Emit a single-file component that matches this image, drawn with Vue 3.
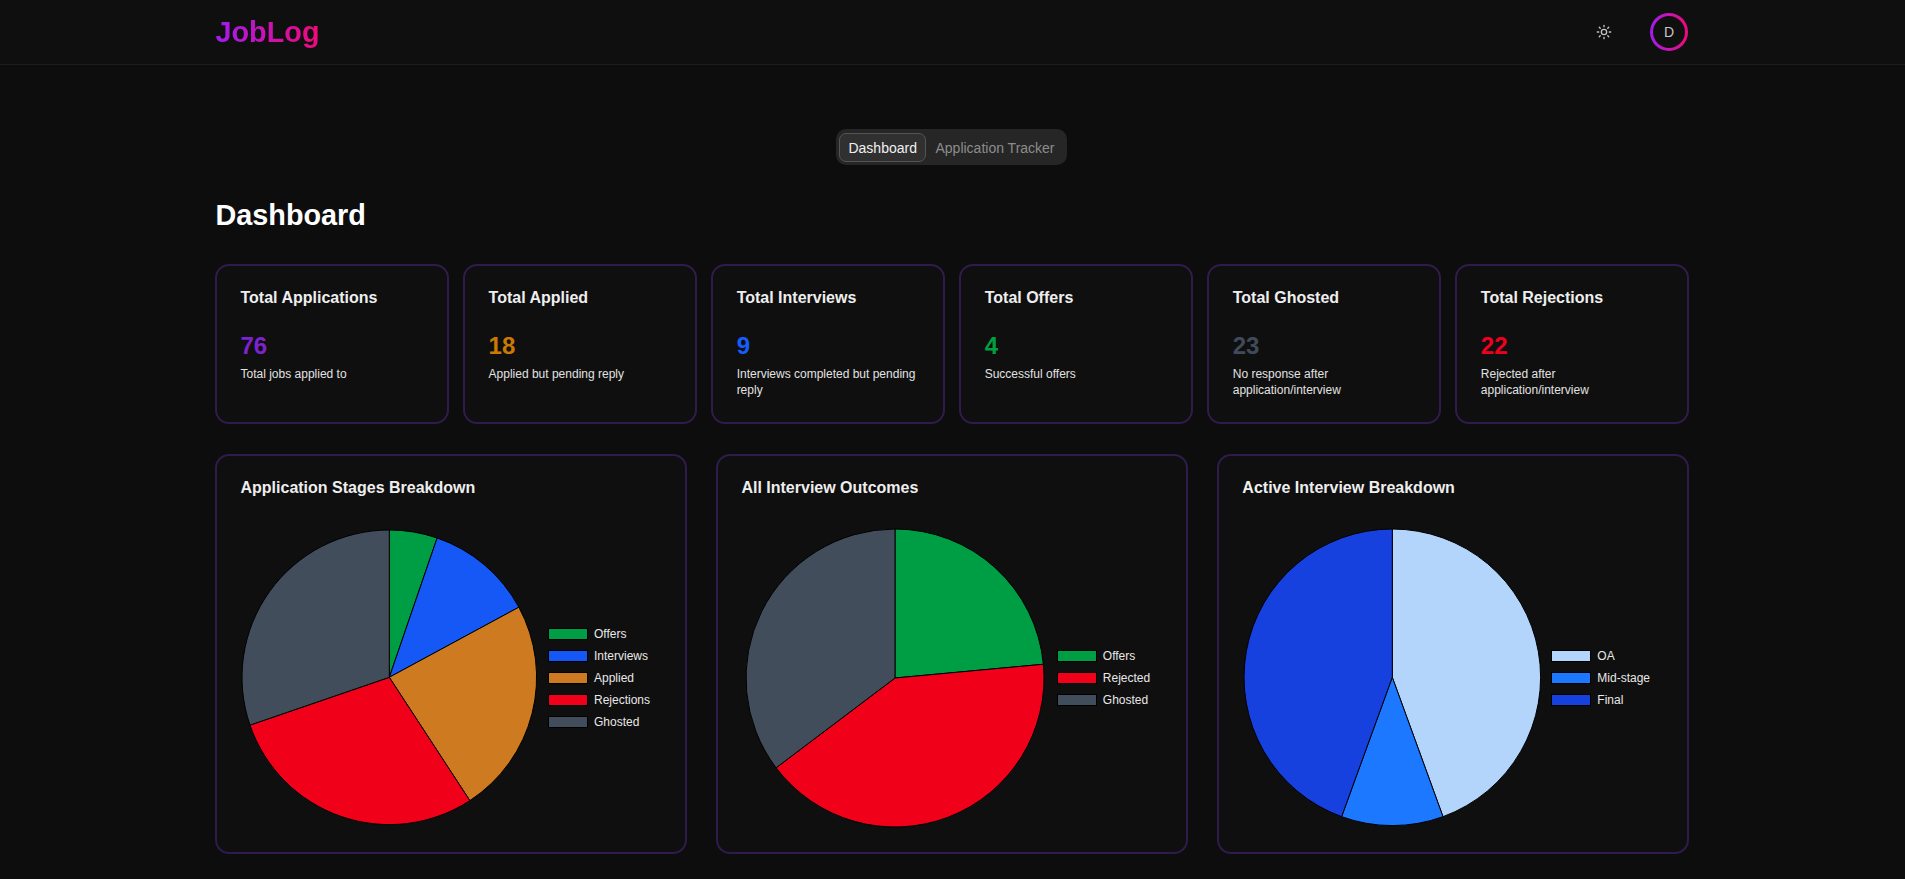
<script setup>
const stats = [
  { title: "Total Applications", value: 76, note: "Total jobs applied to", color: "#7e22ce" },
  { title: "Total Applied", value: 18, note: "Applied but pending reply", color: "#ca7a00" },
  { title: "Total Interviews", value: 9, note: "Interviews completed but pending reply", color: "#155dfc" },
  { title: "Total Offers", value: 4, note: "Successful offers", color: "#00a040" },
  { title: "Total Ghosted", value: 23, note: "No response after application/interview", color: "#3f4a5a" },
  { title: "Total Rejections", value: 22, note: "Rejected after application/interview", color: "#f00020" },
]

const GREEN = "#009e44"
const RED = "#f00019"
const SLATE = "#414d5b"

const charts = [
  {
    title: "Application Stages Breakdown",
    r: 147.3,
    inset: 0.9,
    gap: 10,
    slices: [
      { label: "Offers", value: 4, color: GREEN },
      { label: "Interviews", value: 9, color: "#1558f5" },
      { label: "Applied", value: 18, color: "#cd7a21" },
      { label: "Rejections", value: 22, color: RED },
      { label: "Ghosted", value: 23, color: SLATE },
    ],
  },
  {
    title: "All Interview Outcomes",
    r: 149,
    inset: 3.4,
    gap: 12,
    slices: [
      { label: "Offers", value: 4, color: GREEN },
      { label: "Rejected", value: 7, color: RED },
      { label: "Ghosted", value: 6, color: SLATE },
    ],
  },
  {
    title: "Active Interview Breakdown",
    r: 148.3,
    inset: 0.4,
    gap: 10,
    slices: [
      { label: "OA", value: 4, color: "#b3d5fb" },
      { label: "Mid-stage", value: 1, color: "#1c78ff" },
      { label: "Final", value: 4, color: "#1741de" },
    ],
  },
]

// pie slices, clockwise from 12 o'clock
const slicePaths = (chart) => {
  const size = chart.r * 2 + 2
  const c = size / 2
  const total = chart.slices.reduce((sum, s) => sum + s.value, 0)
  let angle = -Math.PI / 2
  return chart.slices.map((s) => {
    const next = angle + (s.value / total) * Math.PI * 2
    const x1 = c + chart.r * Math.cos(angle)
    const y1 = c + chart.r * Math.sin(angle)
    const x2 = c + chart.r * Math.cos(next)
    const y2 = c + chart.r * Math.sin(next)
    const large = next - angle > Math.PI ? 1 : 0
    angle = next
    return {
      color: s.color,
      d: `M${c} ${c}L${x1} ${y1}A${chart.r} ${chart.r} 0 ${large} 1 ${x2} ${y2}Z`,
    }
  })
}
</script>

<template>
  <div class="page">
    <header class="topbar">
      <div class="topbar-inner">
        <span class="logo">JobLog</span>
        <div class="topbar-right">
          <svg class="sun" viewBox="0 0 24 24" width="16" height="16" fill="none" stroke="currentColor" stroke-width="2" stroke-linecap="round" stroke-linejoin="round">
            <circle cx="12" cy="12" r="4" />
            <path d="M12 2v2M12 20v2M4.93 4.93l1.41 1.41M17.66 17.66l1.41 1.41M2 12h2M20 12h2M6.34 17.66l-1.41 1.41M19.07 4.93l-1.41 1.41" />
          </svg>
          <div class="avatar"><span class="avatar-inner">D</span></div>
        </div>
      </div>
    </header>

    <main class="content">
      <div class="tabs-wrap">
        <nav class="tabs">
          <a class="tab active">Dashboard</a>
          <a class="tab">Application Tracker</a>
        </nav>
      </div>

      <h1 class="heading">Dashboard</h1>

      <section class="stats">
        <div v-for="s in stats" :key="s.title" class="card stat">
          <h3 class="card-title">{{ s.title }}</h3>
          <div class="stat-value" :style="{ color: s.color }">{{ s.value }}</div>
          <p class="stat-note">{{ s.note }}</p>
        </div>
      </section>

      <section class="charts">
        <div v-for="c in charts" :key="c.title" class="card chart">
          <h3 class="card-title">{{ c.title }}</h3>
          <div class="chart-row" :style="{ paddingLeft: c.inset + 'px', gap: c.gap + 'px' }">
            <svg :width="c.r * 2 + 2" :height="c.r * 2 + 2">
              <path v-for="p in slicePaths(c)" :key="p.color" :d="p.d" :fill="p.color" stroke="#000" stroke-width="1" />
            </svg>
            <ul class="legend">
              <li v-for="s in c.slices" :key="s.label" class="legend-row">
                <span class="legend-box" :style="{ background: s.color }"></span>
                <span>{{ s.label }}</span>
              </li>
            </ul>
          </div>
        </div>
      </section>
    </main>
  </div>
</template>

<style scoped>
.page {
  min-height: 879px;
  background: #0d0d0d;
  color: #f2f2f2;
  font-family: "Liberation Sans", Arial, sans-serif;
}

.topbar {
  background: #0f0f0f;
  border-bottom: 1px solid #1c1c1c;
}
.topbar-inner {
  height: 64px;
  padding: 0 217px 0 215.5px;
  display: flex;
  align-items: center;
  justify-content: space-between;
}
.logo {
  font-size: 28.8px;
  font-weight: 700;
  background: linear-gradient(90deg, #a21cf0, #f00a78);
  -webkit-background-clip: text;
  background-clip: text;
  color: transparent;
}
.topbar-right {
  display: flex;
  align-items: center;
  gap: 38px;
}
.sun {
  color: #c4c4c4;
}
.avatar {
  width: 38px;
  height: 38px;
  box-sizing: border-box;
  padding: 3px;
  border-radius: 50%;
  background: linear-gradient(90deg, #a21cf0, #f00a78);
}
.avatar-inner {
  display: flex;
  align-items: center;
  justify-content: center;
  width: 100%;
  height: 100%;
  border-radius: 50%;
  background: #0f0f0f;
  color: #c8c8c8;
  font-size: 14px;
}

.content {
  padding: 64px 216px 26px 215px;
}
.tabs-wrap {
  display: flex;
  justify-content: center;
  padding-right: 1px;
}
.tabs {
  display: flex;
  align-items: center;
  gap: 0.5px;
  height: 36px;
  box-sizing: border-box;
  padding: 0 3px;
  border-radius: 10px;
  background: #262626;
}
.tab {
  padding: 6px 8px;
  height: 29px;
  box-sizing: border-box;
  border: 1px solid transparent;
  border-radius: 7px;
  font-size: 14px;
  line-height: 16px;
  color: #8c8c8c;
}
.tab.active {
  background: #303030;
  border-color: #555;
  color: #f0f0f0;
}

.heading {
  margin: 32px 0 31px;
  padding-left: 0.5px;
  font-size: 28.8px;
  line-height: 36px;
  font-weight: 700;
  color: #fff;
}

.card {
  box-sizing: border-box;
  border: 2px solid #2f1b4c;
  border-radius: 14px;
  background: #0f0f0f;
  padding: 20px 23.5px 0;
}
.card-title {
  margin: 0;
  font-size: 16px;
  line-height: 24px;
  font-weight: 700;
  color: #eee;
}

.stats {
  display: grid;
  grid-template-columns: repeat(6, 1fr);
  gap: 14.4px;
  margin-bottom: 30.5px;
}
.stat {
  padding-bottom: 23.5px;
}
.stat-value {
  margin-top: 20px;
  font-size: 24px;
  line-height: 32px;
  font-weight: 700;
}
.stat-note {
  margin: 4px 0 0;
  min-height: 32px;
  font-size: 12px;
  line-height: 16px;
  color: #e2e2e2;
}

.charts {
  display: grid;
  grid-template-columns: repeat(3, 1fr);
  gap: 28.8px;
}
.chart {
  padding-bottom: 16px;
}
.chart-row {
  display: flex;
  align-items: center;
  height: 315.5px;
  margin-top: 20px;
}
.legend {
  list-style: none;
  margin: 0;
  padding: 0;
}
.legend-row {
  display: flex;
  align-items: center;
  gap: 6px;
  height: 22px;
  font-size: 12px;
  color: #e8e8e8;
}
.legend-box {
  width: 40px;
  height: 12px;
  box-sizing: border-box;
  border: 1px solid #000;
}
</style>
